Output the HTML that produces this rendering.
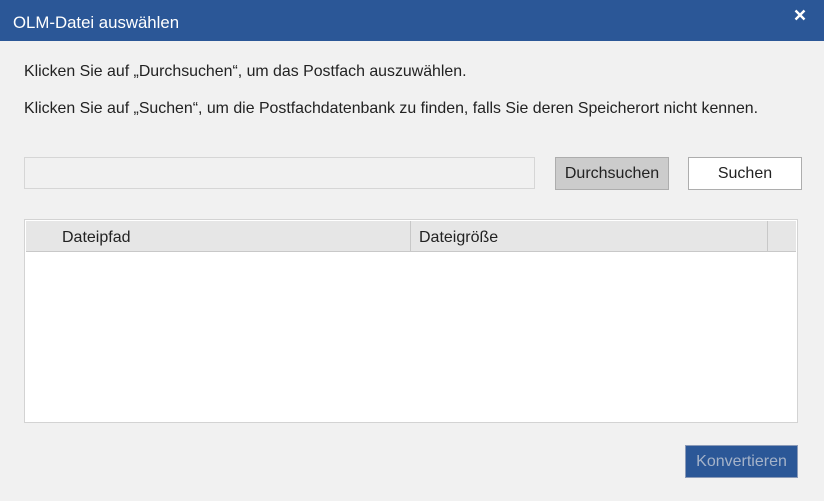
<!DOCTYPE html>
<html><head><meta charset="utf-8"><style>
*{box-sizing:border-box;margin:0;padding:0}
body{width:824px;height:501px;background:#f1f1f1;font-family:"Liberation Sans",sans-serif;position:relative;overflow:hidden;color:#222}
.hdr{position:absolute;left:0;top:0;width:824px;height:41px;background:#2b5797}
.hdr .t{position:absolute;left:13px;top:13px;color:#fff;font-size:16.8px}
.x{position:absolute;left:794px;top:9px}
.p{position:absolute;left:24px;font-size:15.9px}
.in{position:absolute;left:24px;top:157px;width:511px;height:32px;border:1px solid #d6d6d6;background:#f1f1f1}
.btn{position:absolute;top:157px;height:33px;font-size:16px;text-align:center;line-height:31px;border:1px solid #adadad}
.tbl{position:absolute;left:24px;top:219px;width:774px;height:204px;border:1px solid #d3d3d3;background:#fff}
.th{position:absolute;left:1px;top:1px;width:770px;height:31px;background:#e6e6e6;border-bottom:1px solid #c8c8c8;font-size:16px}
.th span{position:absolute;top:8px}
.dv{position:absolute;top:0;width:1px;height:30px;background:#c8c8c8}
.kb{position:absolute;left:685px;top:445px;width:113px;height:33px;background:#2b5797;border:1px solid #8a9ab8;color:#a5b3c9;font-size:16px;text-align:center;line-height:31px}
</style></head><body>
<div class="hdr"><div class="t">OLM-Datei auswählen</div>
<svg class="x" width="12" height="12" viewBox="0 0 12 12"><path d="M1.5 1.5L10.5 10.5M10.5 1.5L1.5 10.5" stroke="#fff" stroke-width="2.4"/></svg></div>
<div class="p" style="top:63px">Klicken Sie auf „Durchsuchen“, um das Postfach auszuwählen.</div>
<div class="p" style="top:100px">Klicken Sie auf „Suchen“, um die Postfachdatenbank zu finden, falls Sie deren Speicherort nicht kennen.</div>
<div class="in"></div>
<div class="btn" style="left:555px;width:114px;background:#cccccc">Durchsuchen</div>
<div class="btn" style="left:688px;width:114px;background:#fff">Suchen</div>
<div class="tbl"><div class="th"><span style="left:36px">Dateipfad</span><div class="dv" style="left:384px"></div><span style="left:393px">Dateigröße</span><div class="dv" style="left:741px"></div></div></div>
<div class="kb">Konvertieren</div>
</body></html>
